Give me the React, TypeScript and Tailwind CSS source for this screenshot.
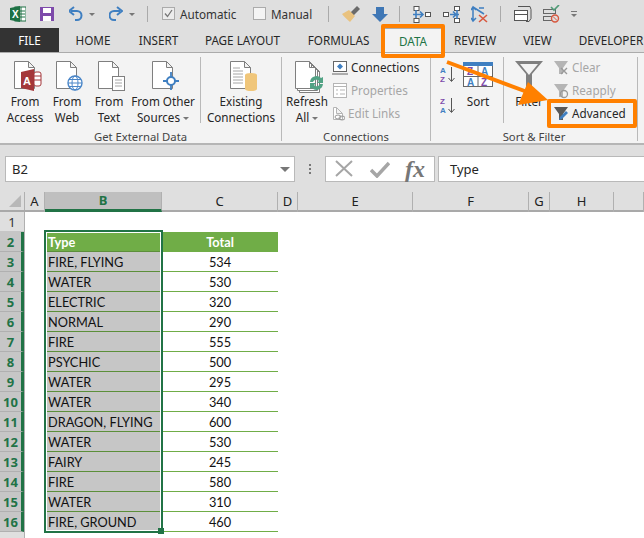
import React from "react";

const UI = { fontFamily: '"Noto Sans", "Open Sans", sans-serif' };
const CELL = { fontFamily: 'Lato, "Noto Sans", sans-serif' };

function Ic({ x, y, w, h, children, className = "" }: { x: number; y: number; w: number; h: number; children?: React.ReactNode; className?: string }) {
  return (
    <svg width={w} height={h} viewBox={`${x} ${y} ${w} ${h}`} className={"block shrink-0 " + className} fill="none">
      {children}
    </svg>
  );
}

function Doc({ x, y = 61, w = 21, h = 28, c = "#7f7f7f" }: { x: number; y?: number; w?: number; h?: number; c?: string }) {
  return (
    <path
      d={`M${x + 0.5} ${y + 0.5}H${x + w - 6.5}L${x + w - 0.5} ${y + 6.5}V${y + h - 0.5}H${x + 0.5}ZM${x + w - 6.5} ${y + 0.5}V${y + 6.5}H${x + w - 0.5}`}
      stroke={c}
      fill="#fff"
    />
  );
}

function Caret({ className = "" }: { className?: string }) {
  return <span className={"inline-block w-0 h-0 border-l-[3px] border-r-[3px] border-t-[3px] border-l-transparent border-r-transparent border-t-[#777] align-middle " + className} />;
}

function Qat() {
  return (
    <div className="flex h-[28px] items-center bg-[#dfdfdf] text-[11.7px] text-[#333]" style={UI}>
      <div className="w-[10px]" />
      <Ic x={10} y={6} w={16} h={16}>
        <rect x={15} y={7} width={11} height={14} fill="#fff" stroke="#1e7145" />
        <path d="M18 11h7M18 14h7M18 17h7M21 7v14" stroke="#1e7145" />
        <path d="M10 8l10-2v16l-10-2z" fill="#1e7145" />
        <text x={12} y={18} fontSize={10} fontWeight={700} fill="#fff" fontFamily="Liberation Sans">X</text>
      </Ic>
      <div className="w-[14px]" />
      <Ic x={40} y={6} w={14} h={16}>
        <rect x={40} y={7} width={14} height={14} fill="#7e4bab" />
        <rect x={43} y={8} width={8} height={5} fill="#fff" />
        <rect x={43} y={16} width={8} height={5} fill="#fff" />
      </Ic>
      <div className="w-[15px]" />
      <Ic x={69} y={6} w={14} h={16}>
        <path d="M71 11h6a4.5 4.5 0 0 1 0 9h-2" stroke="#3f7fc1" strokeWidth={2} />
        <path d="M74 7l-5 4 5 4" stroke="#3f7fc1" strokeWidth={2} />
      </Ic>
      <Caret className="ml-[6px]" />
      <div className="w-[14px]" />
      <Ic x={109} y={6} w={14} h={16}>
        <path d="M120 11h-6a4.5 4.5 0 0 0 0 9h2" stroke="#3f7fc1" strokeWidth={2} />
        <path d="M117 7l5 4-5 4" stroke="#3f7fc1" strokeWidth={2} />
      </Ic>
      <Caret className="ml-[6px]" />
      <div className="w-[13px] border-r border-[#aaa] h-[16px]" />
      <div className="w-[14px]" />
      <div className="w-[13px] h-[13px] -mt-[1px] border border-[#ababab] bg-[#ececec] flex items-center justify-center">
        <svg width="11" height="11" viewBox="0 0 11 11" fill="none"><path d="M2 5.5l2.5 3L9 2" stroke="#777" strokeWidth={1.3} /></svg>
      </div>
      <span className="ml-[5px] w-[73px] pt-[2px]">Automatic</span>
      <div className="w-[13px] h-[13px] -mt-[1px] border border-[#ababab] bg-[#f4f4f4]" />
      <span className="ml-[5px] w-[57px] pt-[2px]">Manual</span>
      <div className="h-[16px] border-r border-[#aaa]" />
      <div className="w-[11px]" />
      <Ic x={340} y={5} w={24} h={18}>
        <path d="M350 13l7-7 3 3-7 7z" fill="#6a6a6a" />
        <path d="M342 14l7-4 6 6-5 6c-3-3-6-5-8-8z" fill="#e9c27f" />
      </Ic>
      <div className="w-[8px]" />
      <Ic x={372} y={5} w={16} h={18}>
        <path d="M376 7h8v7h4l-8 8-8-8h4z" fill="#3f77b5" />
      </Ic>
      <div className="w-[12px] border-r border-[#aaa] h-[16px]" />
      <div className="w-[13px]" />
      <Ic x={413} y={5} w={18} h={18}>
        <rect x={414} y={6.5} width={5} height={4} stroke="#555" fill="#fff" />
        <rect x={414} y={18.5} width={5} height={4} stroke="#555" fill="#fff" />
        <rect x={425.5} y={12.5} width={5} height={4} stroke="#555" fill="#fff" />
        <path d="M413 14.5h10M420 11.5l3 3-3 3M416 10v8" stroke="#3f7fc1" strokeWidth={1.6} />
      </Ic>
      <div className="w-[12px]" />
      <Ic x={443} y={5} w={18} h={18}>
        <rect x={443.5} y={12.5} width={5} height={4} stroke="#555" fill="#fff" />
        <rect x={454.5} y={6.5} width={5} height={4} stroke="#555" fill="#fff" />
        <rect x={454.5} y={18.5} width={5} height={4} stroke="#555" fill="#fff" />
        <path d="M450 14.5h9M453 11.5l3 3-3 3M457 10v9" stroke="#3f7fc1" strokeWidth={1.6} />
      </Ic>
      <div className="w-[10px]" />
      <Ic x={471} y={5} w={18} h={18}>
        <path d="M473 7v13M473 7l11 7M471 10l2-3 3 3M471 18l2 3 3-3M479 8h5" stroke="#3f7fc1" strokeWidth={1.5} />
        <path d="M479 15l8 7M487 15l-8 7" stroke="#d8583f" strokeWidth={1.6} />
      </Ic>
      <div className="w-[12px] border-r border-[#aaa] h-[16px]" />
      <div className="w-[13px]" />
      <Ic x={515} y={5} w={18} h={18}>
        <path d="M519 6.5h12l1 3v9l-2 3h-3" stroke="#555" />
        <rect x={515.5} y={10.5} width={13} height={4} stroke="#555" fill="#fff" />
        <rect x={515.5} y={14.5} width={13} height={6} stroke="#555" fill="#fff" />
      </Ic>
      <div className="w-[11px]" />
      <Ic x={544} y={5} w={18} h={18}>
        <rect x={544.5} y={9.5} width={12} height={4} stroke="#666" />
        <rect x={544.5} y={16.5} width={8} height={4} stroke="#666" />
        <path d="M552 7l3 3 5-5" stroke="#4f9a76" strokeWidth={1.6} />
        <circle cx={556} cy={18.5} r={3.5} stroke="#d8583f" strokeWidth={1.4} />
        <path d="M554 16.5l4 4" stroke="#d8583f" />
      </Ic>
      <div className="w-[10px]" />
      <div className="flex flex-col items-center gap-[2px]">
        <div className="w-[6px] h-[1px] bg-[#777]" />
        <Caret />
      </div>
    </div>
  );
}

const TABS: [string, number][] = [
  ["HOME", 68],
  ["INSERT", 63],
  ["PAGE LAYOUT", 105],
  ["FORMULAS", 87],
  ["DATA", 62],
  ["REVIEW", 62],
  ["VIEW", 63],
  ["DEVELOPER", 84],
];

function Tabs() {
  return (
    <div className="flex h-[25px] bg-[#dfdfdf] border-b border-[#ababab] text-[11.7px] text-[#262626] overflow-hidden" style={UI}>
      <div className="w-[59px] shrink-0 bg-[#333333] text-white flex items-center justify-center pt-[1px]">FILE</div>
      {TABS.map(([t, w]) => (
        <div
          key={t}
          style={{ width: w }}
          className={
            "shrink-0 flex items-center justify-center pt-[2px] " +
            (t === "DATA" ? "bg-[#f3f3f3] border-x border-t border-[#ababab] text-[#217346]" : "")
          }
        >
          {t}
        </div>
      ))}
    </div>
  );
}

function Big({ w, x, lines, caret, children }: { w: number; x: number; lines: string[]; caret?: boolean; children?: React.ReactNode }) {
  return (
    <div style={{ width: w }} className="shrink-0 flex flex-col items-center">
      <Ic x={x} y={57} w={w} h={37} className="-mb-[1px]">{children}</Ic>
      {lines.map((l, i) => (
        <div key={l} className="h-[16px] leading-[16px] whitespace-nowrap text-center">
          {l}
          {caret && i === lines.length - 1 ? <Caret className="ml-[3px]" /> : null}
        </div>
      ))}
    </div>
  );
}

function Small({ icon, label, dim, className = "" }: { icon: React.ReactNode; label: string; dim?: boolean; className?: string }) {
  return (
    <div className={"h-[23px] flex items-center whitespace-nowrap " + (dim ? "text-[#a6a6a6] " : "text-[#262626] ") + className}>
      {icon}
      <span className="ml-[3px]">{label}</span>
    </div>
  );
}

function Group({ w, title, children }: { w: number; title: string; children: React.ReactNode }) {
  return (
    <div style={{ width: w }} className="shrink-0 flex">
      <div className="flex-1 min-w-0 flex flex-col">
        <div className="flex h-[77px] shrink-0 pt-[4px]">{children}</div>
        <div className="h-[13px] shrink-0 leading-[13px] text-center text-[11.3px] text-[#444]">{title}</div>
      </div>
      <div className="w-[1px] h-[84px] mt-[4px] shrink-0 bg-[#b9b9b9]" />
    </div>
  );
}

function AZ({ x, y, top, bot, c1, c2 }: { x: number; y: number; top: string; bot: string; c1: string; c2: string }) {
  return (
    <Ic x={x} y={y} w={16} h={17}>
      <text x={x} y={y + 7} fontSize={8} fontWeight={700} fill={c1} fontFamily="Liberation Sans">{top}</text>
      <text x={x} y={y + 16} fontSize={8} fontWeight={700} fill={c2} fontFamily="Liberation Sans">{bot}</text>
      <path d={`M${x + 11.5} ${y + 1}V${y + 15}M${x + 8.5} ${y + 12}l3 3.5 3-3.5`} stroke="#555" />
    </Ic>
  );
}

function Funnel({ c = "#7f7f7f" }: { c?: string }) {
  return <path d="M1 2h14L10 9v6H6V9z" fill={c} />;
}

function Ribbon() {
  return (
    <div className="flex h-[92px] bg-[#f3f3f3] border-b-2 border-[#b5b5b5] text-[11.7px] text-[#262626] overflow-hidden" style={UI}>
      <Group w={282} title="Get External Data">
        <Big w={50} x={0} lines={["From", "Access"]}>
          <Doc x={14} />
          <path d="M21 72l13-3v22l-13-3z" fill="#a4373a" />
          <rect x={34} y={72} width={7} height={14} rx={2} fill="#fff" stroke="#a4373a" />
          <path d="M34 76h7M34 80h7" stroke="#a4373a" />
          <text x={23} y={85} fontSize={11} fontWeight={700} fill="#fff" fontFamily="Liberation Sans">A</text>
        </Big>
        <Big w={34} x={50} lines={["From", "Web"]}>
          <Doc x={56} />
          <circle cx={75} cy={83} r={7} fill="#fff" stroke="#4a86c8" strokeWidth={1.4} />
          <ellipse cx={75} cy={83} rx={3} ry={7} stroke="#4a86c8" />
          <path d="M68 83h14M69 79.5h12M69 86.5h12" stroke="#4a86c8" />
        </Big>
        <Big w={50} x={84} lines={["From", "Text"]}>
          <Doc x={98} />
          <rect x={112.5} y={76.5} width={12} height={14} fill="#fff" stroke="#7f7f7f" />
          <path d="M115 80h7M115 83h7M115 86h7" stroke="#a6a6a6" />
        </Big>
        <Big w={58} x={134} lines={["From Other", "Sources"]} caret>
          <Doc x={152} />
          <circle cx={171} cy={81} r={4} fill="#fff" stroke="#3f7fc1" strokeWidth={2} />
          <path d="M163 81h4M175 81h4M171 72v5M171 85v5" stroke="#3f7fc1" strokeWidth={1.8} />
        </Big>
        <div className="w-[9px] h-[66px] border-r border-[#b9b9b9] shrink-0" />
        <Big w={80} x={201} lines={["Existing", "Connections"]}>
          <Doc x={230} />
          <path d="M233 68h7M233 71h10M233 74h10M233 77h10M233 80h10M233 83h10" stroke="#a6a6a6" />
          <path d="M245 75a6 2 0 0 1 12 0v14a6 2 0 0 1-12 0z" fill="#f0c67a" />
        </Big>
      </Group>
      <Group w={149} title="Connections">
        <Big w={50} x={282} lines={["Refresh", "All"]} caret>
          <Doc x={299} y={65} />
          <Doc x={297} y={63} />
          <Doc x={295} y={61} />
          <path d="M310 82a6.5 6.5 0 0 1 11-4l2-1v6h-6l2-2a3.5 3.5 0 0 0-6 1z" fill="#52a385" />
          <path d="M323 84a6.5 6.5 0 0 1-11 4l-2 1v-6h6l-2 2a3.5 3.5 0 0 0 6-1z" fill="#52a385" />
        </Big>
        <div className="-mt-[1px]">
          <Small
            label="Connections"
            icon={
              <Ic x={333} y={60} w={16} h={14}>
                <rect x={334.5} y={60.5} width={13} height={10} stroke="#666" fill="#fff" />
                <path d="M333 73h16" stroke="#666" />
                <path d="M341 62.5l3 3-3 3-3-3z" fill="#3f7fc1" />
              </Ic>
            }
          />
          <Small
            dim
            label="Properties"
            icon={
              <Ic x={333} y={83} w={16} h={16}>
                <rect x={334.5} y={83.5} width={13} height={14} stroke="#b5b5b5" fill="#fff" />
                <path d="M334 86.5h14M337 90h2M341 90h5M337 94h2M341 94h5" stroke="#b5b5b5" />
              </Ic>
            }
          />
          <Small
            dim
            label="Edit Links"
            icon={
              <Ic x={336} y={106} w={13} h={16}>
                <Doc x={337} y={107} w={10} h={13} c="#b5b5b5" />
                <ellipse cx={342} cy={117} rx={3} ry={2} stroke="#999" />
                <ellipse cx={346} cy={118} rx={3} ry={2} stroke="#999" />
              </Ic>
            }
          />
        </div>
      </Group>
      <Group w={207} title="Sort & Filter">
        <div className="w-[9px] shrink-0" />
        <div className="w-[23px] shrink-0 flex flex-col pt-[9px] gap-[14px]">
          <AZ x={440} y={66} top="A" bot="Z" c1="#3f7fc1" c2="#7e4bab" />
          <AZ x={440} y={97} top="Z" bot="A" c1="#7e4bab" c2="#3f7fc1" />
        </div>
        <div className="w-[30px] shrink-0 flex flex-col items-center">
          <Ic x={463} y={57} w={30} h={37} className="-mb-[1px]">
            <rect x={463.5} y={62.5} width={29} height={24} fill="#fff" stroke="#666" />
            <rect x={463} y={62} width={30} height={4} fill="#3f7fc1" />
            <path d="M478 66v21M463 76.5h30" stroke="#666" />
            <text x={467} y={75} fontSize={10} fontWeight={700} fill="#7e4bab" fontFamily="Liberation Sans">Z</text>
            <text x={467} y={86} fontSize={10} fontWeight={700} fill="#3f7fc1" fontFamily="Liberation Sans">A</text>
            <text x={481} y={75} fontSize={10} fontWeight={700} fill="#3f7fc1" fontFamily="Liberation Sans">A</text>
            <text x={481} y={86} fontSize={10} fontWeight={700} fill="#7e4bab" fontFamily="Liberation Sans">Z</text>
          </Ic>
          <div className="h-[16px] leading-[16px]">Sort</div>
        </div>
        <div className="w-[10px] shrink-0" />
        <div className="w-[1px] h-[66px] bg-[#b9b9b9] shrink-0" />
        <div className="w-[50px] shrink-0 flex flex-col items-center">
          <Ic x={504} y={57} w={50} h={37} className="-mb-[1px]">
            <path d="M515 61h28l-11 13v16h-6V74z" fill="#7f7f7f" />
            <path d="M520 64h18l-9 11z" fill="#f3f3f3" />
          </Ic>
          <div className="h-[16px] leading-[16px]">Filter</div>
        </div>
        <div className="-mt-[1px] -ml-[1px]">
          <Small
            dim
            label="Clear"
            icon={
              <svg width="16" height="17" viewBox="0 0 16 17" className="block">
                <Funnel c="#b5b5b5" />
                <path d="M8 9l6 6M14 9l-6 6" stroke="#999" strokeWidth={1.4} />
              </svg>
            }
          />
          <Small
            dim
            label="Reapply"
            icon={
              <svg width="16" height="17" viewBox="0 0 16 17" className="block">
                <Funnel c="#b5b5b5" />
                <circle cx={11} cy={12} r={3.5} fill="none" stroke="#999" strokeWidth={1.3} />
              </svg>
            }
          />
          <Small
            label="Advanced"
            icon={
              <svg width="16" height="17" viewBox="0 0 16 17" className="block">
                <Funnel c="#595959" />
                <path d="M6 15l1-3 6-6 2 2-6 6z" fill="#3f7fc1" />
              </svg>
            }
          />
        </div>
      </Group>
    </div>
  );
}

function FormulaBar() {
  return (
    <div className="flex h-[47px] bg-[#dfdfdf] pt-[11px] text-[13px] text-[#262626]" style={UI}>
      <div className="ml-[5px] w-[290px] h-[26px] bg-white border border-[#b9b9b9] flex items-center justify-between pl-[6px] pr-[4px]">
        <span className="pt-[1px]">B2</span>
        <span className="w-0 h-0 border-l-[5px] border-r-[5px] border-t-[5px] border-l-transparent border-r-transparent border-t-[#777]" />
      </div>
      <div className="w-[30px] flex flex-col items-center justify-center gap-[2px] h-[26px]">
        <span className="w-[2px] h-[2px] bg-[#777]" />
        <span className="w-[2px] h-[2px] bg-[#777]" />
        <span className="w-[2px] h-[2px] bg-[#777]" />
      </div>
      <div className="w-[110px] h-[26px] bg-white border border-[#b9b9b9] flex items-center">
        <svg width="18" height="18" viewBox="0 0 18 18" className="ml-[9px]" fill="none"><path d="M1 1l16 15M17 1L1 16" stroke="#a6a6a6" strokeWidth={2} /></svg>
        <svg width="20" height="18" viewBox="0 0 20 18" className="ml-[17px]" fill="none"><path d="M1 10l6 6L19 3" stroke="#a6a6a6" strokeWidth={3.5} /></svg>
        <span className="ml-[15px] text-[24px] leading-[22px] italic font-bold text-[#777]" style={{ fontFamily: '"Liberation Serif", serif' }}>fx</span>
      </div>
      <div className="ml-[3px] flex-1 h-[26px] bg-white border border-r-0 border-[#b9b9b9] flex items-center pl-[11px]">
        <span className="pt-[1px]">Type</span>
      </div>
    </div>
  );
}

const COLS: [string, number][] = [
  ["A", 20],
  ["B", 117],
  ["C", 116],
  ["D", 20],
  ["E", 115],
  ["F", 116],
  ["G", 21],
  ["H", 64],
  ["", 30],
];

function ColHeaders() {
  return (
    <div className="flex h-[20px] bg-[#dfdfdf] border-b-2 border-[#a9a9a9] text-[13px] text-[#222]" style={UI}>
      <div className="w-[25px] shrink-0 border-r border-[#b0b0b0] relative overflow-hidden">
        <div className="absolute right-[3px] bottom-[3px] w-0 h-0 border-l-[12px] border-b-[12px] border-l-transparent border-b-[#b8b8b8]" />
      </div>
      {COLS.map(([c, w]) => (
        <div
          key={c + w}
          style={{ width: w }}
          className={
            "shrink-0 h-[20px] flex items-center justify-center border-r border-[#b0b0b0] " +
            (c === "B" ? "bg-[#bfbfbf] border-b-[3px] border-b-[#217346] text-[#217346] font-bold" : "")
          }
        >
          {c}
        </div>
      ))}
    </div>
  );
}

const DATA: [string, string][] = [
  ["Type", "Total"],
  ["FIRE, FLYING", "534"],
  ["WATER", "530"],
  ["ELECTRIC", "320"],
  ["NORMAL", "290"],
  ["FIRE", "555"],
  ["PSYCHIC", "500"],
  ["WATER", "295"],
  ["WATER", "340"],
  ["DRAGON, FLYING", "600"],
  ["WATER", "530"],
  ["FAIRY", "245"],
  ["FIRE", "580"],
  ["WATER", "310"],
  ["FIRE, GROUND", "460"],
];

function Sheet() {
  return (
    <div className="relative flex-1 flex overflow-hidden bg-white" style={CELL}>
      <div className="w-[25px] shrink-0 bg-[#dfdfdf] border-r border-[#b0b0b0]">
        <div className="h-[20px] flex items-center justify-center border-b border-[#c6c6c6] pt-[2px] text-[13px] text-[#333]" style={UI}>1</div>
        {DATA.map((_, i) => (
          <div key={i} className="h-[20px] flex items-center justify-center bg-[#c6c6c6] border-b border-[#b0b0b0] border-r-[3px] border-r-[#217346] pt-[2px] text-[13px] font-bold text-[#217346]" style={UI}>
            {i + 2}
          </div>
        ))}
      </div>
      <div className="ml-[20px] pt-[20px] text-[12.75px] text-[#111]">
        {DATA.map(([t, n], i) => (
          <div key={i} className="flex h-[20px]">
            <div className={"w-[117px] flex items-center pl-[3px] pt-[2px] border-b " + (i === 0 ? "bg-[#70ad47] border-[#5c8f3a] text-white font-bold" : "bg-[#c6c6c6] border-[#5c8f3a]")}>{t}</div>
            <div className={"w-[116px] flex items-center justify-center pt-[2px] border-b " + (i === 0 ? "bg-[#70ad47] border-[#70ad47] text-white font-bold" : "border-[#70ad47]")}>{n}</div>
          </div>
        ))}
      </div>
      <div className="absolute left-[44px] top-[18px] w-[119px] h-[303px] border-2 border-[#217346] pointer-events-none">
        <div className="w-full h-full border border-white" />
        <div className="absolute -right-[3px] -bottom-[3px] w-[6px] h-[6px] bg-[#217346]" />
      </div>
    </div>
  );
}

export default function App() {
  return (
    <div className="relative w-[644px] h-[538px] overflow-hidden flex flex-col bg-white">
      <Qat />
      <Tabs />
      <Ribbon />
      <FormulaBar />
      <ColHeaders />
      <Sheet />
      <div className="absolute left-[381px] top-[24px] w-[64px] h-[34px] border-[4px] border-[#ff8000] rounded-[2px]" />
      <div className="absolute left-[547px] top-[99px] w-[90px] h-[29px] border-[4px] border-[#ff8000] rounded-[2px]" />
      <svg className="absolute left-0 top-0 pointer-events-none" width="644" height="538" fill="none">
        <path d="M447 62L530 93" stroke="#ff8000" strokeWidth={4} />
        <path d="M528 82L518 105L548 100Z" fill="#ff8000" />
      </svg>
    </div>
  );
}
